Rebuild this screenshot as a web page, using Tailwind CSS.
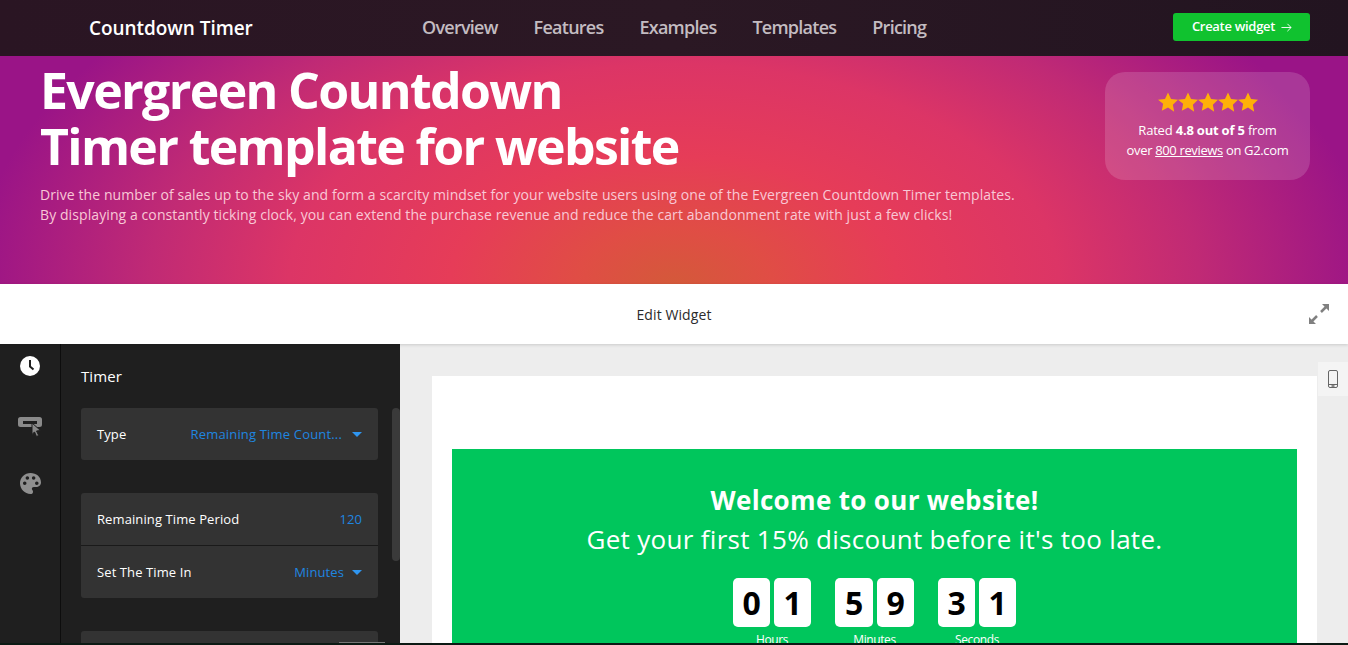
<!DOCTYPE html>
<html lang="en">
<head>
	<meta charset="UTF-8">
	<title>Evergreen Countdown Timer</title>
	<script src="https://cdn.jsdelivr.net/npm/@tailwindcss/browser@4"></script>
</head>
<body class="h-screen overflow-hidden bg-white font-['Open_Sans',sans-serif]">
	<!-- nav -->
	<header class="h-14 flex items-center bg-[linear-gradient(90deg,#2a1523,#2b1824_50%,#221420)] pl-[89px] pr-[38px]">
		<span class="w-[333px] text-white text-[19px] font-semibold tracking-[-0.05px]">Countdown Timer</span>
		<nav class="mb-0.5 flex gap-9 text-[#c3bcc1] text-[18px] font-semibold tracking-[-0.75px]">
			<a>Overview</a>
			<a>Features</a>
			<a>Examples</a>
			<a>Templates</a>
			<a>Pricing</a>
		</nav>
		<a class="mb-0.5 ml-auto w-[137px] h-7 pl-px rounded-[3px] bg-[#10c22f] text-white text-[13px] font-semibold flex items-center justify-center gap-1.5 tracking-[-0.3px]">
			Create widget
			<svg class="w-[11px] h-[11px]" viewBox="0 0 12 12" fill="none" stroke="currentColor" stroke-width="1"><path d="M0.5 6h10.5M7 2l4 4-4 4"/></svg>
		</a>
	</header>

	<!-- hero -->
	<section class="h-[228px] flex justify-between pl-10 pr-[38px] bg-[#9a1487] bg-[radial-gradient(ellipse_700px_400px_at_50%_100%,#d4593a_0%,#e04d45_14%,#e63c58_32%,#dc3566_55%,#c02a75_75%,#9a1487_100%)]">
		<div>
			<h1 class="mt-[6px] text-white text-[50px] leading-[56px] font-bold tracking-[-1.65px]">Evergreen Countdown<br>Timer template for website</h1>
			<p class="mt-[11px] text-[#f9c8d6] text-[14px] leading-5 tracking-[0.09px]">Drive the number of sales up to the sky and form a scarcity mindset for your website users using one of the Evergreen Countdown Timer templates.<br>By displaying a constantly ticking clock, you can extend the purchase revenue and reduce the cart abandonment rate with just a few clicks!</p>
		</div>
		<div class="mt-4 w-[205px] h-[108px] rounded-[20px] bg-white/15 flex flex-col items-center text-white text-[13px] leading-5 tracking-[-0.2px]">
			<div class="mt-[20px] h-5 flex">
				<svg class="w-5 h-5" viewBox="0.700 1 22.600 21.500" fill="#ffb008"><path d="M12 1l3.400 7.300 7.900 1-5.800 5.500 1.500 7.900L12 18l-7 3.700 1.500-7.900L.7 9.300l7.900-1z"/></svg>
				<svg class="w-5 h-5" viewBox="0.700 1 22.600 21.500" fill="#ffb008"><path d="M12 1l3.400 7.300 7.900 1-5.800 5.500 1.500 7.900L12 18l-7 3.700 1.500-7.900L.7 9.300l7.900-1z"/></svg>
				<svg class="w-5 h-5" viewBox="0.700 1 22.600 21.500" fill="#ffb008"><path d="M12 1l3.400 7.300 7.900 1-5.800 5.500 1.500 7.900L12 18l-7 3.700 1.500-7.900L.7 9.300l7.900-1z"/></svg>
				<svg class="w-5 h-5" viewBox="0.700 1 22.600 21.500" fill="#ffb008"><path d="M12 1l3.400 7.300 7.900 1-5.800 5.500 1.500 7.900L12 18l-7 3.700 1.500-7.900L.7 9.300l7.900-1z"/></svg>
				<svg class="w-5 h-5" viewBox="0.700 1 22.600 21.500" fill="#ffb008"><path d="M12 1l3.400 7.300 7.900 1-5.800 5.500 1.500 7.900L12 18l-7 3.700 1.500-7.900L.7 9.300l7.900-1z"/></svg>
			</div>
			<p class="mt-[8px]">Rated <b>4.8 out of 5</b> from</p>
			<p class="tracking-[-0.35px]">over <u>800 reviews</u> on G2.com</p>
		</div>
	</section>

	<!-- edit bar -->
	<div class="relative z-10 h-[60px] flex items-center justify-center bg-white shadow-[0_1px_3px_rgba(0,0,0,0.15)] text-[14px] text-[#2b2b2b] tracking-[0.1px]">
		Edit Widget
		<svg class="absolute right-[18px] top-[19px] w-[22px] h-[22px]" viewBox="0 0 22 22" fill="#808080" stroke="#808080"><path d="M3 19L9 13M19 3l-6 6" fill="none" stroke-width="2.500"/><path d="M1 14l7 7H1zM21 8l-7-7h7z" stroke="none"/></svg>
	</div>

	<!-- editor -->
	<main class="relative h-[301px] flex overflow-hidden border-b-2 border-[#0c1a14]">
		<div class="w-[61px] shrink-0 bg-[#1f1f1f] border-r border-[#0d0d0d] flex flex-col items-center">
			<svg class="mt-[12px] w-5 h-5" viewBox="0 0 20 20"><circle cx="10" cy="10" r="10" fill="#fff"/><path d="M10 4v6.500l3.500 3" fill="none" stroke="#1f1f1f" stroke-width="2"/></svg>
			<svg class="mt-[41px] w-6 h-5" viewBox="0 0 24 20">
				<path fill-rule="evenodd" fill="#8a8a8a" d="M2.500 0h19A2.500 2.500 0 0 1 24 2.500v5a2.500 2.500 0 0 1-2.500 2.500h-19A2.500 2.500 0 0 1 0 7.500v-5A2.500 2.500 0 0 1 2.500 0zM5 4v3h14V4z"/>
				<path fill="#8a8a8a" stroke="#1f1f1f" d="M14 6l8.500 7.500-4 .5 2.200 4.500-2.200 1-2-4.600-2.500 2.600z"/>
			</svg>
			<svg class="mt-[36px] w-[21px] h-[21px]" viewBox="0 0 20 20"><path fill-rule="evenodd" fill="#8f8f8f" d="M10 0C4.500 0 0 4.300 0 9.800S4.500 20 10 20c1.600 0 2.400-1 2.400-2.200 0-.6-.3-1.100-.6-1.500-.3-.4-.5-.8-.5-1.300 0-1 .8-1.700 1.800-1.700h2.200c2.600 0 4.700-1.700 4.700-4.300C20 3.600 15.500 0 10 0zM4.500 11.500a1.700 1.700 0 1 1 0-3.400 1.700 1.700 0 0 1 0 3.400zM7 6.500a1.700 1.700 0 1 1 0-3.400 1.700 1.700 0 0 1 0 3.400zm6 0a1.700 1.700 0 1 1 0-3.400 1.700 1.700 0 0 1 0 3.400zm3 5a1.700 1.700 0 1 1 0-3.400 1.700 1.700 0 0 1 0 3.400z"/></svg>
		</div>

		<aside class="relative w-[339px] shrink-0 bg-[#1f1f1f] pl-5 pr-[22px] text-[13px] text-white tracking-[0.1px]">
			<h2 class="mt-[22px] text-[15px] leading-5">Timer</h2>
			<div class="mt-[22px] h-[52px] flex items-center justify-between rounded-[3px] bg-[#333333] px-4 pt-px">
				<span>Type</span>
				<span class="flex items-center gap-[10px] text-[#1f86e0] tracking-[0.17px]">Remaining Time Count...
					<i class="border-x-[5px] border-t-[5px] border-x-transparent border-t-[#2f96f0]"></i></span>
			</div>
			<div class="mt-[33px] rounded-[3px] bg-[#333333] divide-y divide-[#1a1a1a]">
				<div class="h-[53px] flex items-center justify-between px-4 pt-px">
					<span>Remaining Time Period</span>
					<span class="text-[#1f86e0]">120</span>
				</div>
				<div class="h-[52px] flex items-center justify-between px-4 pt-px">
					<span>Set The Time In</span>
					<span class="flex items-center gap-2 text-[#1f86e0]">Minutes
						<i class="border-x-[5px] border-t-[5px] border-x-transparent border-t-[#2f96f0]"></i></span>
				</div>
			</div>
			<div class="mt-[33px] h-12 rounded-[3px] bg-[#333333]"></div>
			<div class="absolute right-0 top-[64px] w-2 h-[153px] rounded-[4px] bg-[#3a3a3a]"></div>
			<div class="absolute right-[15px] bottom-0 w-[46px] h-px bg-[#777777]"></div>
		</aside>

		<div class="relative flex-1 bg-[#ededed] pl-8 pr-[31px] pt-8">
			<div class="h-full bg-white px-5 pt-[73px]">
				<div class="h-[300px] bg-[#00c65c] text-white text-center pt-[33px]">
					<p class="text-[26px] leading-9 font-bold tracking-[0.33px]">Welcome to our website!</p>
					<p class="mt-[3px] text-[26px] leading-9 tracking-[0.3px]">Get your first 15% discount before it's too late.</p>
					<div class="mt-[21px] flex justify-center gap-[24px] text-[12px] tracking-[-0.4px]">
						<div>
							<div class="flex gap-1 text-[32px] leading-[49px] font-bold text-black">
								<span class="w-[37px] h-[49px] rounded-[5px] bg-white">0</span>
								<span class="w-[37px] h-[49px] rounded-[5px] bg-white">1</span>
							</div>
							<p class="mt-[4px]">Hours</p>
						</div>
						<div>
							<div class="flex gap-1 text-[32px] leading-[49px] font-bold text-black">
								<span class="w-[38px] h-[49px] rounded-[5px] bg-white">5</span>
								<span class="w-[37px] h-[49px] rounded-[5px] bg-white">9</span>
							</div>
							<p class="mt-[4px]">Minutes</p>
						</div>
						<div>
							<div class="flex gap-1 text-[32px] leading-[49px] font-bold text-black">
								<span class="w-[37px] h-[49px] rounded-[5px] bg-white">3</span>
								<span class="w-[37px] h-[49px] rounded-[5px] bg-white">1</span>
							</div>
							<p class="mt-[4px]">Seconds</p>
						</div>
					</div>
				</div>
			</div>
			<div class="absolute right-0 top-[18px] w-[30px] h-[34px] bg-[#f4f4f4] flex items-center justify-center">
				<svg class="w-[10px] h-[18px]" viewBox="0 0 10 18" fill="none" stroke="#666666"><rect x="0.5" y="0.500" width="9" height="17" rx="1.500"/><path d="M0.500 14.500h9"/><path d="M3.500 16h3" stroke-width="1.500"/></svg>
			</div>
		</div>
	</main>
</body>
</html>
